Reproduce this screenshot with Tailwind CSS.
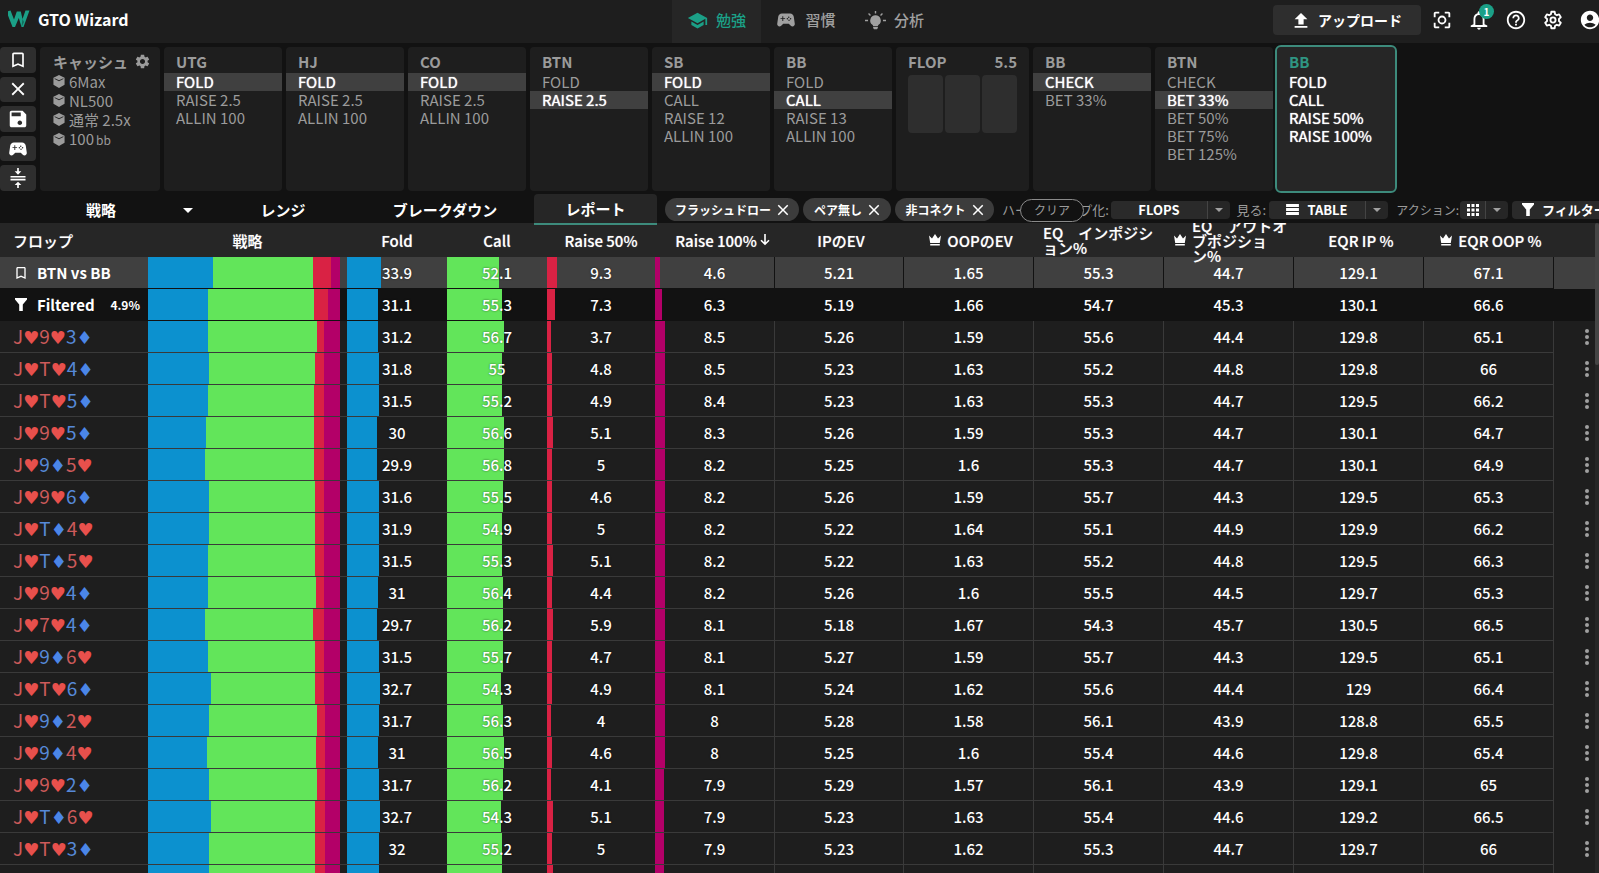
<!DOCTYPE html>
<html lang="ja">
<head>
<meta charset="utf-8">
<meta name="viewport" content="width=device-width, initial-scale=1">
<title>GTO Wizard</title>
<script src="https://cdn.jsdelivr.net/npm/@tailwindcss/browser@4"></script>
</head>
<body class="flex h-screen flex-col overflow-hidden bg-[#121212] font-['Noto_Sans_CJK_JP',sans-serif] text-[15px] leading-[18px] text-white">

<svg class="hidden" aria-hidden="true">
  <symbol id="bookmark" viewBox="0 0 24 24"><path d="M17 3H7c-1.100 0-2 .9-2 2v16l7-3 7 3V5c0-1.100-.9-2-2-2m0 15-5-2.180L7 18V5h10z"/></symbol>
  <symbol id="close" viewBox="0 0 24 24"><path d="M19 6.410 17.590 5 12 10.590 6.410 5 5 6.410 10.590 12 5 17.590 6.410 19 12 13.410 17.590 19 19 17.590 13.410 12z"/></symbol>
  <symbol id="save" viewBox="0 0 24 24"><path d="M17 3H5c-1.110 0-2 .9-2 2v14c0 1.100.89 2 2 2h14c1.100 0 2-.9 2-2V7l-4-4m-3 15.500c-1.380 0-2.500-1.120-2.500-2.500s1.120-2.500 2.500-2.500 2.500 1.120 2.500 2.500-1.120 2.500-2.500 2.500M15 9H5V5h10z"/></symbol>
  <symbol id="gamepad" viewBox="0 0 24 24"><path fill-rule="evenodd" d="M21.580 16.090l-1.090-7.660C20.210 6.460 18.520 5 16.530 5H7.470C5.480 5 3.790 6.460 3.510 8.430l-1.090 7.660C2.200 17.630 3.390 19 4.940 19c.68 0 1.320-.27 1.800-.75L9 16h6l2.250 2.250c.48.48 1.130.75 1.800.75 1.560 0 2.750-1.370 2.530-2.910M11 11H9v2H8v-2H6v-1h2V8h1v2h2zM15 9.700a.8.8 0 1 1 0-1.600.8.8 0 0 1 0 1.600m-1.500 1.700a.8.8 0 1 1 0-1.600.8.8 0 0 1 0 1.600m3.500 0a.8.8 0 1 1 0-1.600.8.8 0 0 1 0 1.600m-1.700 1.700a.8.8 0 1 1 0-1.600.8.8 0 0 1 0 1.600"/></symbol>
  <symbol id="compress" viewBox="0 0 24 24"><path d="M3 9.500h18v2H3zM3 13h18v2H3zM11 0h2v4h3l-4 4-4-4h3zM11 24.500h2v-4h3l-4-4-4 4h3z"/></symbol>
  <symbol id="school" viewBox="0 0 24 24"><path d="M5 13.180v4L12 21l7-3.820v-4L12 17zM12 3 1 9l11 6 9-4.910V17h2V9z"/></symbol>
  <symbol id="bulb" viewBox="0 0 24 24"><path d="M12 6a6 6 0 0 0-3.500 10.900c.6.5.8 1 .8 1.600h5.400c0-.6.2-1.100.8-1.600A6 6 0 0 0 12 6M9.300 19.500h5.400v1l-1 1.500h-3.400l-1-1.500zM11.200 1h1.600v3h-1.600zM0 11.200h3.500v1.600H0zM20.500 11.200H24v1.600h-3.500zM3.500 4.600l1.100-1.100 2.200 2.200-1.100 1.100zM20.500 4.600l-1.100-1.100-2.200 2.200 1.100 1.100z"/></symbol>
  <symbol id="upload" viewBox="0 0 24 24"><path d="M3.500 20h17v2.200h-17zM3.500 11h5v7h7v-7h5L12 2.500z"/></symbol>
  <symbol id="focus" viewBox="0 0 24 24"><path d="M5 15H3v4c0 1.100.9 2 2 2h4v-2H5zM5 5h4V3H5c-1.100 0-2 .9-2 2v4h2zm14-2h-4v2h4v4h2V5c0-1.100-.9-2-2-2m0 16h-4v2h4c1.100 0 2-.9 2-2v-4h-2zM12 7.200a4.800 4.800 0 1 0 0 9.600 4.800 4.800 0 0 0 0-9.600m0 7.600a2.800 2.800 0 1 1 0-5.600 2.800 2.800 0 0 1 0 5.600"/></symbol>
  <symbol id="bell" viewBox="0 0 24 24"><path d="M12 22.500c1.100 0 2-.9 2-2h-4c0 1.100.9 2 2 2m6-6v-5.500c0-3.070-1.630-5.640-4.500-6.320V4c0-.83-.67-1.500-1.500-1.500s-1.500.67-1.500 1.500v.68C7.640 5.360 6 7.920 6 11v5.500l-3 1.500v1.500h18V18zm-2 1H8V11c0-2.480 1.510-4.500 4-4.500s4 2.020 4 4.500z"/></symbol>
  <symbol id="help" viewBox="0 0 24 24"><path d="M11 18h2v-2h-2zm1-16C6.480 2 2 6.480 2 12s4.480 10 10 10 10-4.480 10-10S17.520 2 12 2m0 18c-4.410 0-8-3.590-8-8s3.590-8 8-8 8 3.590 8 8-3.590 8-8 8m0-14c-2.210 0-4 1.790-4 4h2c0-1.100.9-2 2-2s2 .9 2 2c0 2-3 1.750-3 5h2c0-2.250 3-2.500 3-5 0-2.210-1.790-4-4-4"/></symbol>
  <symbol id="gear" viewBox="0 0 24 24"><path d="M19.140 12.940c.04-.3.06-.61.06-.94 0-.32-.02-.64-.07-.94l2.030-1.580c.18-.14.23-.41.12-.61l-1.920-3.320c-.12-.22-.37-.29-.59-.22l-2.390.96c-.5-.38-1.030-.7-1.620-.94l-.36-2.540c-.04-.24-.24-.41-.48-.41h-3.840c-.24 0-.43.17-.47.41l-.36 2.540c-.59.24-1.130.57-1.620.94l-2.390-.96c-.22-.08-.47 0-.59.22L2.740 8.870c-.12.21-.08.47.12.61l2.030 1.580c-.05.3-.09.63-.09.94s.02.64.07.94l-2.030 1.580c-.18.14-.23.41-.12.61l1.920 3.320c.12.22.37.29.59.22l2.390-.96c.5.38 1.030.7 1.620.94l.36 2.540c.05.24.24.41.48.41h3.840c.24 0 .44-.17.47-.41l.36-2.540c.59-.24 1.130-.56 1.620-.94l2.390.96c.22.08.47 0 .59-.22l1.920-3.320c.12-.22.07-.47-.12-.61zM12 15.600c-1.980 0-3.600-1.620-3.600-3.600s1.620-3.600 3.600-3.600 3.600 1.620 3.600 3.600-1.620 3.600-3.600 3.600"/></symbol>
  <symbol id="gear-line" viewBox="0 0 24 24"><path fill="none" stroke="currentColor" stroke-width="2" stroke-linejoin="round" d="M10.200 3h3.600l.5 2.700 1.900 1.100 2.500-.9 1.800 3.100-2 1.800v2.400l2 1.800-1.800 3.100-2.500-.9-1.900 1.100-.5 2.700h-3.600l-.5-2.700-1.900-1.100-2.500.9L3.500 15l2-1.800v-2.400l-2-1.800 1.800-3.100 2.500.9 1.900-1.100z"/><circle cx="12" cy="12" r="2.800" fill="none" stroke="currentColor" stroke-width="2"/></symbol>
  <symbol id="account" viewBox="0 0 24 24"><path d="M12 2C6.480 2 2 6.480 2 12s4.480 10 10 10 10-4.480 10-10S17.520 2 12 2m0 4c1.930 0 3.500 1.570 3.500 3.500S13.930 13 12 13s-3.500-1.570-3.500-3.500S10.070 6 12 6m0 14c-2.030 0-4.430-.82-6.140-2.880C7.550 15.800 9.680 15 12 15s4.450.8 6.140 2.120C16.430 19.180 14.030 20 12 20"/></symbol>
  <symbol id="cube" viewBox="0 0 12 14"><path d="M6 0l6 3v7.500L6 14l-6-3.500V3z"/><path fill="#1e1e1e" d="M6 6.800 1.300 4.300v-.9L6 5.700l4.700-2.300v.9z"/></symbol>
  <symbol id="caret" viewBox="0 0 10 5"><path d="M0 0h10L5 5z"/></symbol>
  <symbol id="crown" viewBox="0 0 12 12"><path d="M0 1.500 3 4.500 6 0l3 4.500 3-3L10.800 9H1.200zM1.200 10h9.600v1.600H1.200z"/></symbol>
  <symbol id="funnel" viewBox="0 0 12 13"><path d="M0 0h12v1.500L7.800 6.500V13H4.200V6.500L0 1.500z"/></symbol>
  <symbol id="rows" viewBox="0 0 14 12"><path d="M0 0h14v3.400H0zM0 4.300h14v3.400H0zM0 8.600h14V12H0z"/></symbol>
  <symbol id="grid" viewBox="0 0 12 12"><path d="M0 0h3v3H0zM4.500 0h3v3h-3zM9 0h3v3H9zM0 4.500h3v3H0zM4.500 4.500h3v3h-3zM9 4.500h3v3H9zM0 9h3v3H0zM4.500 9h3v3h-3zM9 9h3v3H9z"/></symbol>
  <symbol id="dots" viewBox="0 0 4 16"><circle cx="2" cy="2" r="2"/><circle cx="2" cy="8" r="2"/><circle cx="2" cy="14" r="2"/></symbol>
  <symbol id="down" viewBox="0 0 10 12"><path fill="none" stroke="currentColor" stroke-width="1.600" d="M5 0v10M1 6.200l4 4 4-4"/></symbol>
</svg>

<header class="flex h-[43px] shrink-0 overflow-hidden bg-[#1e1e1e] pl-[3px]">
  <div class="flex flex-1 items-center pb-[6px] pl-[5px]">
    <a href="#" class="flex items-center gap-2 text-[16px] font-bold">
      <svg class="h-[18px] w-[22px]" viewBox="0 0 22 18" aria-hidden="true"><path fill="#1ba087" d="M-1.500 1.500l4-1 3.500 9L8.800 1.500h4L14.500 9l3-8.500h4L15.500 17h-2L10.800 8 7 17H4.500z"/><path fill="#126b5b" d="M13.500 17l1-8 1.500 3z"/></svg>
      <span>GTO Wizard</span>
    </a>
  </div>
  <nav class="flex text-[15px] font-medium text-[#a0a0a0]">
    <a href="#" class="flex w-[89px] items-center justify-center gap-2 bg-[#262626] pb-[3px] text-[#1ba087]"><svg class="size-[21px] fill-current"><use href="#school"/></svg>勉強</a>
    <a href="#" class="flex w-[89px] items-center justify-center gap-2 pb-[3px]"><svg class="size-[22px] fill-current"><use href="#gamepad"/></svg>習慣</a>
    <a href="#" class="flex w-[89px] items-center justify-center gap-2 pb-[3px]"><svg class="size-[21px] fill-current"><use href="#bulb"/></svg>分析</a>
  </nav>
  <div class="-mr-[4px] flex flex-1 items-center justify-end gap-[13px] pb-[4px]">
    <button class="mr-[-3px] flex h-[30px] w-[148px] items-center justify-center gap-2 rounded bg-[#2e2e2e] text-[14px] font-bold"><svg class="size-[18px] fill-current"><use href="#upload"/></svg>アップロード</button>
    <button class="size-6" aria-label="フォーカス"><svg class="size-6 fill-current" viewBox="0 0 24 24"><use href="#focus" width="22" height="22" y="1"/></svg></button>
    <button class="relative size-6" aria-label="通知"><svg class="size-6 fill-current" viewBox="0 0 24 24"><use href="#bell" width="22" height="22" y="1"/></svg><span class="absolute -top-1 right-[-2px] size-[15px] rounded-full bg-[#1ba087] text-center text-[10px] leading-[15px] font-bold">1</span></button>
    <button class="size-6" aria-label="ヘルプ"><svg class="size-6 fill-current" viewBox="0 0 24 24"><use href="#help" width="22" height="22" y="1"/></svg></button>
    <button class="size-6" aria-label="設定"><svg class="size-6 fill-current" viewBox="0 0 24 24"><use href="#gear-line" width="22" height="22" y="1"/></svg></button>
    <button class="size-6" aria-label="アカウント"><svg class="size-6 fill-current" viewBox="0 0 24 24"><use href="#account" width="22" height="22" y="1"/></svg></button>
  </div>
</header>

<section class="flex h-[148px] shrink-0 gap-1 pt-1 text-[#9b9b9b]">
  <div class="flex w-9 shrink-0 flex-col gap-1 text-white">
    <button class="flex flex-1 items-center justify-center rounded bg-[#2e2e2e]" aria-label="ブックマーク"><svg class="size-5 fill-current"><use href="#bookmark"/></svg></button>
    <button class="flex flex-1 items-center justify-center rounded bg-[#2e2e2e]" aria-label="閉じる"><svg class="size-[22px] fill-current"><use href="#close"/></svg></button>
    <button class="flex flex-1 items-center justify-center rounded bg-[#2e2e2e]" aria-label="保存"><svg class="size-[22px] fill-current"><use href="#save"/></svg></button>
    <button class="flex flex-1 items-center justify-center rounded bg-[#2e2e2e]" aria-label="プレイ"><svg class="size-[22px] fill-current"><use href="#gamepad"/></svg></button>
    <button class="flex flex-1 items-center justify-center rounded bg-[#2e2e2e]" aria-label="折りたたむ"><svg class="size-5 fill-current"><use href="#compress"/></svg></button>
  </div>
  <div class="w-[120px] shrink-0 rounded bg-[#1e1e1e] pt-[5px] pl-[13px] leading-[19px]">
    <div class="flex items-center justify-between pr-[9px] pb-px font-bold leading-[19px]">キャッシュ<svg class="size-[17px] fill-current"><use href="#gear"/></svg></div>
    <div class="flex items-center gap-1"><svg class="h-[13px] w-3 fill-current"><use href="#cube"/></svg>6Max</div>
    <div class="flex items-center gap-1"><svg class="h-[13px] w-3 fill-current"><use href="#cube"/></svg>NL500</div>
    <div class="flex items-center gap-1"><svg class="h-[13px] w-3 fill-current"><use href="#cube"/></svg>通常 2.5x</div>
    <div class="flex items-center gap-1"><svg class="h-[13px] w-3 fill-current"><use href="#cube"/></svg><span>100<span class="pl-[2px] text-[12px]">bb</span></span></div>
  </div>
  <div id="actions" class="flex gap-1"></div>
</section>

<section class="relative z-20 flex h-[34px] shrink-0 items-end text-[15px] font-bold">
  <div class="flex h-[31px] shrink-0" role="tablist">
    <button role="tab" class="relative w-[202px]">戦略<svg class="absolute top-[14px] left-[183px] h-[5px] w-[10px] fill-current"><use href="#caret"/></svg></button>
    <button role="tab" class="w-[162px]">レンジ</button>
    <button role="tab" class="w-[162px]">ブレークダウン</button>
    <button role="tab" aria-selected="true" class="ml-2 w-[123px] rounded-t border-b-2 border-[#3d8b7c] bg-[#262626]">レポート</button>
  </div>
  <div class="flex h-[31px] min-w-0 flex-1 items-center overflow-hidden pl-2 text-[13px]">
    <div class="flex shrink-0 gap-1 text-[12px]">
      <button class="flex h-[23px] w-[134px] items-center justify-center gap-[6px] rounded-full bg-[#3c3c3c]">フラッシュドロー<svg class="size-3 fill-current" viewBox="4 4 16 16"><use href="#close" width="24" height="24"/></svg></button>
      <button class="flex h-[23px] w-[88px] items-center justify-center gap-[6px] rounded-full bg-[#3c3c3c]">ペア無し<svg class="size-3 fill-current" viewBox="4 4 16 16"><use href="#close" width="24" height="24"/></svg></button>
      <button class="flex h-[23px] w-[99px] items-center justify-center gap-[6px] rounded-full bg-[#3c3c3c]">非コネクト<svg class="size-3 fill-current" viewBox="4 4 16 16"><use href="#close" width="24" height="24"/></svg></button>
    </div>
    <div class="relative ml-2 w-[109px] shrink-0 text-[13px] font-normal whitespace-nowrap text-[#9b9b9b]">
      <span>ハートグループ化:</span>
      <button class="absolute -top-[2px] left-[18px] h-[23px] w-[64px] rounded-full border border-[#8a8a8a] bg-[#121212] text-[12px]">クリア</button>
    </div>
    <div class="flex h-[18px] w-[119px] shrink-0 items-center rounded bg-[#262626]"><button class="flex h-full flex-1 items-center justify-center rounded-l bg-[#2a2a2a]">FLOPS</button><button class="flex h-full w-[23px] items-center justify-center border-l border-[#444] text-[#a0a0a0]" aria-label="グループ"><svg class="h-1 w-2 fill-current"><use href="#caret"/></svg></button></div>
    <span class="w-[39px] shrink-0 pr-[3px] text-right font-normal text-[#9b9b9b]">見る:</span>
    <div class="flex h-[18px] w-[119px] shrink-0 items-center rounded bg-[#262626]"><button class="flex h-full flex-1 items-center justify-center gap-2 rounded-l bg-[#2a2a2a]"><svg class="h-[11px] w-[13px] fill-current"><use href="#rows"/></svg>TABLE</button><button class="flex h-full w-[23px] items-center justify-center border-l border-[#444] text-[#a0a0a0]" aria-label="表示"><svg class="h-1 w-2 fill-current"><use href="#caret"/></svg></button></div>
    <span class="w-[72px] shrink-0 pr-px text-right text-[12px] font-normal whitespace-nowrap text-[#9b9b9b]">アクション:</span>
    <div class="flex h-[18px] w-[48px] shrink-0 items-center rounded bg-[#262626]"><button class="flex h-full flex-1 items-center justify-center rounded-l bg-[#2a2a2a]" aria-label="グリッド"><svg class="h-3 w-3 fill-current"><use href="#grid"/></svg></button><button class="flex h-full w-[23px] items-center justify-center border-l border-[#444] text-[#a0a0a0]" aria-label="アクション"><svg class="h-1 w-2 fill-current"><use href="#caret"/></svg></button></div>
    <button class="ml-1 flex h-[18px] shrink-0 items-center gap-2 rounded bg-[#2a2a2a] px-[10px] text-[13px]"><svg class="h-[13px] w-3 fill-current"><use href="#funnel"/></svg>フィルター</button>
  </div>
</section>

<main class="-mt-[2px] flex min-h-0 flex-1">
  <div class="min-w-0 flex-1 overflow-hidden bg-[#1e1e1e]">
    <table class="w-full table-fixed border-separate border-spacing-0 text-center font-medium">
      <colgroup><col class="w-[148px]"><col class="w-[199px]"><col class="w-[100px]"><col class="w-[100px]"><col class="w-[108px]"><col class="w-[119px]"><col><col><col><col><col><col><col class="w-[41px]"></colgroup>
      <thead id="head" class="relative z-10"></thead>
      <tbody id="rows-body"></tbody>
    </table>
  </div>
  <div class="w-1 bg-[#262626]"><div class="h-[142px] rounded bg-[#454545]"></div></div>
</main>

<script>
// Each step: [seat, options, index of the chosen option]
const steps = [
  ['UTG', ['FOLD', 'RAISE 2.5', 'ALLIN 100'], 0],
  ['HJ', ['FOLD', 'RAISE 2.5', 'ALLIN 100'], 0],
  ['CO', ['FOLD', 'RAISE 2.5', 'ALLIN 100'], 0],
  ['BTN', ['FOLD', 'RAISE 2.5'], 1],
  ['SB', ['FOLD', 'CALL', 'RAISE 12', 'ALLIN 100'], 0],
  ['BB', ['FOLD', 'CALL', 'RAISE 13', 'ALLIN 100'], 1],
  null,
  ['BB', ['CHECK', 'BET 33%'], 0],
  ['BTN', ['CHECK', 'BET 33%', 'BET 50%', 'BET 75%', 'BET 125%'], 1],
  ['BB', ['FOLD', 'CALL', 'RAISE 50%', 'RAISE 100%'], -1],
];
document.getElementById('actions').innerHTML = steps.map(step => {
  if (!step) return `<div class="w-[133px] shrink-0 rounded bg-[#1e1e1e] px-3 pt-[5px]">
    <div class="flex justify-between pb-1 font-bold leading-[19px]"><span>FLOP</span><span>5.5</span></div>
    <div class="flex h-[58px] gap-[2px]"><button class="flex-1 rounded bg-[#2e2e2e]" aria-label="カード1"></button><button class="flex-1 rounded bg-[#2e2e2e]" aria-label="カード2"></button><button class="flex-1 rounded bg-[#2e2e2e]" aria-label="カード3"></button></div></div>`;
  const [seat, options, chosen] = step;
  const active = chosen < 0;
  const box = active ? 'w-[118px] shrink-0 rounded-sm bg-[#262626] pt-[5px] outline-2 outline-[#3d8b7c]' : 'w-[118px] shrink-0 rounded bg-[#1e1e1e] pt-[5px]';
  return `<div class="${box}"><div class="px-3 pb-[2px] text-[15px] leading-[19px] font-bold ${active ? 'text-[#2f9683]' : ''}">${seat}</div>` +
    options.map((o, i) => `<button class="block h-[18px] w-full px-3 text-left leading-[18px] ${active ? 'text-white text-shadow-[0_0_1px_white]' : i === chosen ? 'bg-[#404040] text-white text-shadow-[0_0_1px_white]' : ''}">${o}</button>`).join('') + '</div>';
}).join('');

const icon = (id, cls) => `<svg class="${cls}" aria-hidden="true"><use href="#${id}"/></svg>`;
const crown = icon('crown', 'size-3 shrink-0 fill-current');
const heads = ['フロップ', '戦略', 'Fold', 'Call', 'Raise 50%', 'Raise 100%' + icon('down', 'ml-[3px] h-3 w-[10px]'), 'IPのEV', crown + 'OOPのEV', 'EQ　インポジション%', crown + '<span>EQ　アウトオブポジション%</span>', 'EQR IP %', crown + 'EQR OOP %', ''];
document.getElementById('head').innerHTML = '<tr>' + heads.map((h, i) => {
  const align = i === 0 ? 'justify-start pl-[13px]' : i === 5 ? 'justify-center pl-4' : i === 8 ? 'px-[9px] text-left' : i === 9 ? 'gap-[6px] pl-[10px] text-left' : i > 5 ? 'justify-center gap-[6px] pl-1' : 'justify-center';
  return `<th class="bg-[#262626] p-0 font-medium text-shadow-[0_0_1px_rgb(255_255_255/0.5)]"><div class="relative flex h-[34px] items-center leading-[15px] ${align}">${h}</div></th>`;
}).join('') + '</tr>';

// Flop, fold, call, raise 50, raise 100, IP EV, OOP EV, EQ IP, EQ OOP, EQR IP, EQR OOP
const data = `BTN 33.9 52.1 9.3 4.6 5.21 1.65 55.3 44.7 129.1 67.1
Filtered 31.1 55.3 7.3 6.3 5.19 1.66 54.7 45.3 130.1 66.6
J♥9♥3♦ 31.2 56.7 3.7 8.5 5.26 1.59 55.6 44.4 129.8 65.1
J♥T♥4♦ 31.8 55 4.8 8.5 5.23 1.63 55.2 44.8 129.8 66
J♥T♥5♦ 31.5 55.2 4.9 8.4 5.23 1.63 55.3 44.7 129.5 66.2
J♥9♥5♦ 30 56.6 5.1 8.3 5.26 1.59 55.3 44.7 130.1 64.7
J♥9♦5♥ 29.9 56.8 5 8.2 5.25 1.6 55.3 44.7 130.1 64.9
J♥9♥6♦ 31.6 55.5 4.6 8.2 5.26 1.59 55.7 44.3 129.5 65.3
J♥T♦4♥ 31.9 54.9 5 8.2 5.22 1.64 55.1 44.9 129.9 66.2
J♥T♦5♥ 31.5 55.3 5.1 8.2 5.22 1.63 55.2 44.8 129.5 66.3
J♥9♥4♦ 31 56.4 4.4 8.2 5.26 1.6 55.5 44.5 129.7 65.3
J♥7♥4♦ 29.7 56.2 5.9 8.1 5.18 1.67 54.3 45.7 130.5 66.5
J♥9♦6♥ 31.5 55.7 4.7 8.1 5.27 1.59 55.7 44.3 129.5 65.1
J♥T♥6♦ 32.7 54.3 4.9 8.1 5.24 1.62 55.6 44.4 129 66.4
J♥9♦2♥ 31.7 56.3 4 8 5.28 1.58 56.1 43.9 128.8 65.5
J♥9♦4♥ 31 56.5 4.6 8 5.25 1.6 55.4 44.6 129.8 65.4
J♥9♥2♦ 31.7 56.2 4.1 7.9 5.29 1.57 56.1 43.9 129.1 65
J♥T♦6♥ 32.7 54.3 5.1 7.9 5.23 1.63 55.4 44.6 129.2 66.5
J♥T♥3♦ 32 55.2 5 7.9 5.23 1.62 55.3 44.7 129.7 66
J♥T♦3♥ 32 55.2 5.1 7.7 5.23 1.62 55.3 44.7 129.7 66`.split('\n').map(l => l.split(' '));
const fills = ['bg-[#0c91cf]', 'bg-[#62e55a]', 'bg-[#d92244]', 'bg-[#b30068]'];
const suited = text => [...text].map((c, i, all) => {
  const suit = i % 2 ? c : all[i + 1];
  const tone = suit === '♥' ? (i % 2 ? 'text-[#e8504c]' : 'text-[#cc5a5a]') : (i % 2 ? 'text-[#4b86e8]' : 'text-[#5689d8]');
  return i % 2 ? `<span class="font-['DejaVu_Sans'] text-[18px] ${tone}">${c}</span>` : `<span class="${tone}">${c}</span>`;
}).join('');
document.getElementById('rows-body').innerHTML = data.map(([name, ...v], r) => {
  const bg = r === 0 ? 'bg-[#404040]' : r === 1 ? 'bg-[#121212]' : 'bg-[#1e1e1e]';
  const line = r < 2 ? 'border-[#121212]' : 'border-[#3a3a3a]';
  const cell = `relative h-8 border-b p-0 ${bg} ${line}`;
  const label = r === 0 ? `<span class="flex items-center gap-2 pl-[13px] font-bold">${icon('bookmark', 'size-4 fill-current')}BTN vs BB</span>`
    : r === 1 ? `<span class="flex items-center pl-[15px] font-bold">${icon('funnel', 'mr-[10px] h-[13px] w-3 fill-current')}Filtered<span class="ml-auto pr-2 text-[12px]">4.9%</span></span>`
    : `<span class="block pl-[13px] text-left text-[19px] font-normal leading-[24px]">${suited(name)}</span>`;
  const mix = `<div class="flex h-[31px] w-[192px]">` + fills.map((f, i) => `<div class="${f}" style="width:${v[i]}%"></div>`).join('') + '</div>';
  const bars = v.slice(0, 4).map((n, i) => `<td class="${cell}"><div class="absolute inset-y-0 left-0 ${fills[i]}" style="width:${n}%"></div><span class="relative text-shadow-[0_0_2px_rgb(0_0_0/0.6)]">${n}</span></td>`).join('');
  const nums = v.slice(4).map((n, i) => `<td class="${cell} ${i === 0 ? 'border-l' : ''} border-r">${n}</td>`).join('');
  return `<tr><th class="${cell}">${label}</th><td class="${cell}">${mix}</td>${bars}${nums}<td class="h-8 p-0 ${bg}">${r > 1 ? `<button class="ml-[25px] block w-4 text-[#a0a0a0]" aria-label="メニュー">${icon('dots', 'mx-auto h-4 w-1 fill-current')}</button>` : ''}</td></tr>`;
}).join('');
</script>
</body>
</html>
